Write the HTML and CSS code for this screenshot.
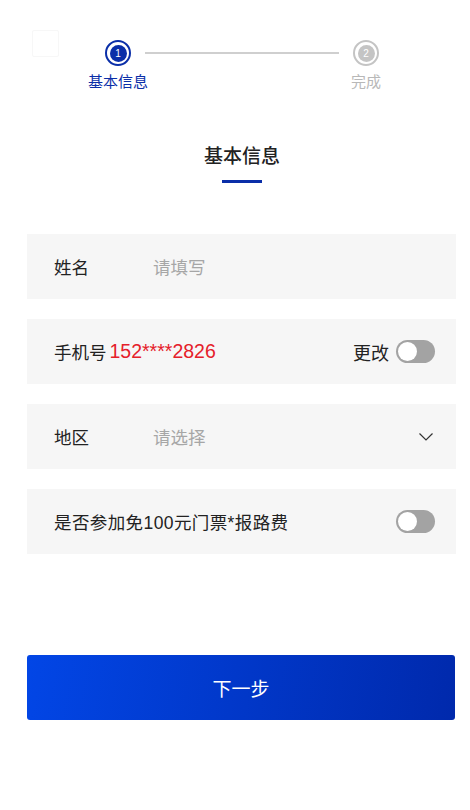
FILE: index.html
```html
<!DOCTYPE html>
<html lang="zh-CN">
<head>
  <meta charset="UTF-8" />
  <meta name="viewport" content="width=device-width, initial-scale=1" />
  <title>基本信息</title>
  <link rel="stylesheet" href="styles.css">
</head>
<body>
  <div class="top">
    <div class="back"></div>
    <div class="steps">
      <div class="step active">
        <div class="dot"><span>1</span></div>
        <div class="step-name">基本信息</div>
      </div>
      <div class="step-line"></div>
      <div class="step">
        <div class="dot"><span>2</span></div>
        <div class="step-name">完成</div>
      </div>
    </div>
  </div>

  <h1 class="title">基本信息</h1>

  <div class="form">
    <div class="row">
      <span class="label">姓名</span>
      <span class="hint">请填写</span>
    </div>
    <div class="row">
      <span class="label auto">手机号</span><span class="phone">152****2826</span>
      <span class="right">更改</span>
      <span class="switch"></span>
    </div>
    <div class="row">
      <span class="label">地区</span>
      <span class="hint">请选择</span>
      <svg class="arrow" width="16" height="10" viewBox="0 0 16 10">
        <polyline points="1.5,1.5 8,8 14.5,1.5" fill="none" stroke="#333" stroke-width="1.2" />
      </svg>
    </div>
    <div class="row">
      <span class="label auto wide">是否参加免100元门票*报路费</span>
      <span class="switch push"></span>
    </div>
  </div>

  <button class="next">下一步</button>
</body>
</html>
```

FILE: styles.css
```css
body {
  margin: 0;
  background: #fff;
  font-family: "Noto Sans CJK SC", "Noto Sans", sans-serif;
  color: #222;
}

.top {
  position: relative;
  padding-top: 40px;
  height: 62px;
}

.back {
  position: absolute;
  left: 32px;
  top: 30px;
  width: 25px;
  height: 25px;
  border: 1px solid #f7f7f7;
  border-radius: 2px;
}

.steps {
  display: flex;
  align-items: flex-start;
  margin-left: 88px;
  width: 308px;
}

.step {
  width: 60px;
  display: flex;
  flex-direction: column;
  align-items: center;
}

.dot {
  width: 22px;
  height: 22px;
  border: 2px solid #c4c4c4;
  border-radius: 50%;
  display: flex;
  align-items: center;
  justify-content: center;
}

.dot span {
  width: 17px;
  height: 17px;
  border-radius: 50%;
  background: #c4c4c4;
  color: #fff;
  font-size: 10px;
  line-height: 17px;
  text-align: center;
  font-family: "Liberation Sans", sans-serif;
}

.step-name {
  margin-top: 4px;
  font-size: 15px;
  color: #b8b8b8;
}

.step.active .dot {
  border-color: #0a2ea8;
}

.step.active .dot span {
  background: #0a2ea8;
}

.step.active .step-name {
  color: #0a2ea8;
}

.step-line {
  flex: 1;
  height: 2px;
  background: #cfcfcf;
  margin: 12px -3px 0;
}

.title {
  margin: 38px 0 0;
  padding-left: 14px;
  text-align: center;
  font-size: 19px;
  font-weight: 500;
  line-height: 30px;
}

.title::after {
  content: "";
  display: block;
  width: 40px;
  height: 3px;
  background: #0a2ea8;
  margin: 10px auto 0;
}

.form {
  margin: 51px 14px 0 27px;
  display: flex;
  flex-direction: column;
  gap: 20px;
}

.row {
  height: 65px;
  background: #f6f6f6;
  display: flex;
  align-items: center;
  padding: 0 21px 0 27px;
  font-family: "Liberation Sans", "Noto Sans CJK SC", sans-serif;
  font-size: 17.5px;
}

.label {
  width: 99px;
  white-space: nowrap;
}

.label.auto {
  width: auto;
}

.label.wide {
  letter-spacing: 0.4px;
}

.hint {
  color: #a6a6a6;
}

.phone {
  color: #e5202a;
  font-size: 19.5px;
  margin-left: 3px;
}

.right {
  margin-left: auto;
  font-size: 18px;
  margin-right: 7px;
}

.switch {
  position: relative;
  width: 39px;
  height: 23px;
  border-radius: 12px;
  background: #a3a3a3;
}

.switch::before {
  content: "";
  position: absolute;
  left: 2px;
  top: 2px;
  width: 19px;
  height: 19px;
  border-radius: 50%;
  background: #fff;
}

.push {
  margin-left: auto;
}

.arrow {
  margin-left: auto;
  margin-right: 1px;
}

.next {
  display: block;
  margin: 101px 15px 0 27px;
  width: 428px;
  height: 65px;
  border: none;
  border-radius: 3px;
  background: linear-gradient(100deg, #0246e6, #0029ac);
  color: #fff;
  font-family: "Noto Sans CJK SC", sans-serif;
  font-size: 19px;
}
```
